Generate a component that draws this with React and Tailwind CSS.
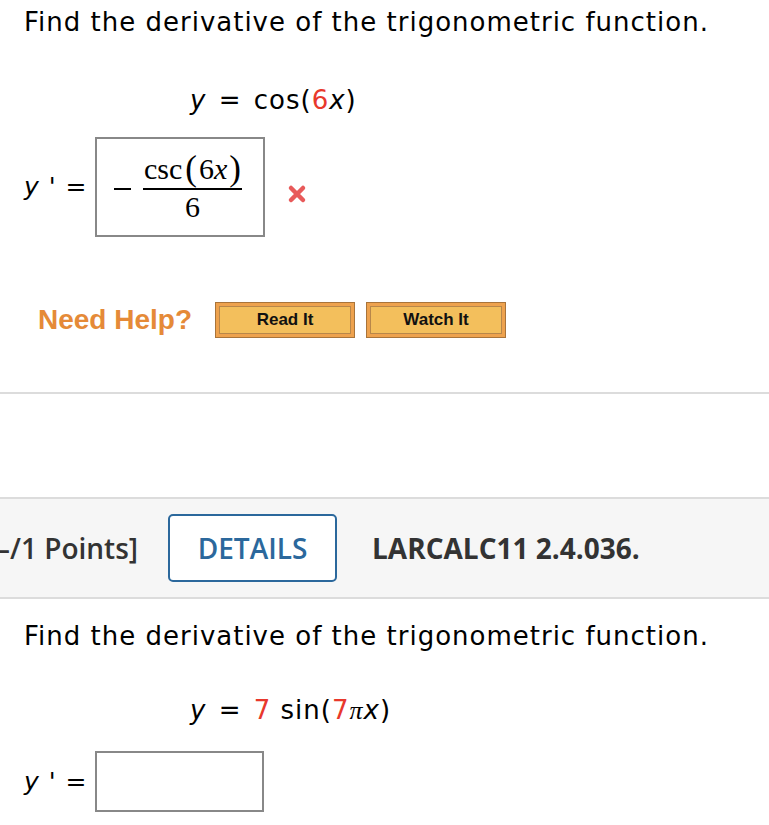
const sans = { fontFamily: '"DejaVu Sans", Verdana, sans-serif' };

const Red = ({ children }) => <span className="text-[#e8382c]">{children}</span>;

const Equation = ({ children, className = "" }) => (
  <div className={`text-[26px] tracking-[1px] text-black ${className}`} style={sans}>
    <i>y</i> <span className="mx-[3px]">=</span> {children}
  </div>
);

const HelpButton = ({ label }) => (
  <button className="h-[36px] w-[140px] border border-[#a9743a] bg-[#eea24e] p-[3px]">
    <span className="flex h-full items-center justify-center border border-[#b8874a] bg-[#f3bf5c] text-[17px] font-bold text-[#111] [font-family:'Liberation_Sans',Arial,sans-serif]">
      {label}
    </span>
  </button>
);

const RedX = () => (
  <svg width="20" height="20" viewBox="0 0 20 20" className="ml-[22px] mt-[14px]">
    <path d="M4 4 L16 16 M16 4 L4 16" stroke="#e85a5a" strokeWidth="4.5" strokeLinecap="round" />
  </svg>
);

const Prime = () => (
  <span className="w-[71px] text-[25px] tracking-[1px] text-black" style={sans}>
    <i>y</i> ' =
  </span>
);

const Title = () => (
  <p className="text-[26px] leading-[32px] tracking-[1px] text-black" style={sans}>
    Find the derivative of the trigonometric function.
  </p>
);

export default function App() {
  return (
    <div className="min-h-[825px] w-[769px] overflow-hidden bg-white">
      <div className="pl-[24px] pt-[6px]">
        <Title />
        <Equation className="ml-[166px] mt-[43px]">
          cos(<Red>6</Red><i>x</i>)
        </Equation>

        <div className="mt-[17px] flex items-center">
          <Prime />
          <div className="flex h-[100px] w-[170px] items-center border-2 border-[#888] pl-[17px] [font-family:'Liberation_Serif','Times_New_Roman',serif]">
            <span className="mr-[12px] mt-[4px] block h-[2px] w-[17px] bg-black" />
            <div className="flex flex-col items-center">
              <span className="flex items-center px-[1px] text-[30px] leading-[32px] text-black">
                csc
                <span className="ml-[3px] mr-[2px] text-[35px] leading-[32px]">(</span>
                6<i>x</i>
                <span className="ml-[2px] text-[35px] leading-[32px]">)</span>
              </span>
              <span className="my-[3px] block h-[2px] w-full bg-black" />
              <span className="text-[30px] leading-[28px] text-black">6</span>
            </div>
          </div>
          <RedX />
        </div>

        <div className="mt-[62px] flex items-center">
          <span className="ml-[14px] mr-[23px] text-[28px] font-bold text-[#e58a38] [font-family:'Liberation_Sans',Arial,sans-serif]">
            Need Help?
          </span>
          <div className="flex gap-[11px]">
            <HelpButton label="Read It" />
            <HelpButton label="Watch It" />
          </div>
        </div>
      </div>

      <div className="mt-[51px] border-t-2 border-[#dcdcdc]" />
      <div className="mt-[103px] flex h-[102px] items-center border-y-2 border-[#dcdcdc] bg-[#f6f6f6] [font-family:'Open_Sans',sans-serif]">
        <span className="ml-[-4px] text-[28px] font-semibold text-[#333]">–/1 Points]</span>
        <span className="ml-[30px] flex h-[68px] w-[169px] items-center justify-center rounded-[5px] border-2 border-[#2b689c] bg-white text-[28px] font-semibold text-[#2b689c]">
          DETAILS
        </span>
        <span className="ml-[35px] text-[28px] font-bold text-[#333]">LARCALC11 2.4.036.</span>
      </div>

      <div className="pl-[24px] pt-[21px]">
        <Title />
        <Equation className="ml-[166px] mt-[39px]">
          <Red>7</Red> sin(<Red>7</Red><i className="[font-family:'Liberation_Serif',serif]">π</i><i>x</i>)
        </Equation>
        <div className="mt-[21px] flex items-center">
          <Prime />
          <div className="h-[61px] w-[169px] border-2 border-[#888]" />
        </div>
      </div>
    </div>
  );
}
